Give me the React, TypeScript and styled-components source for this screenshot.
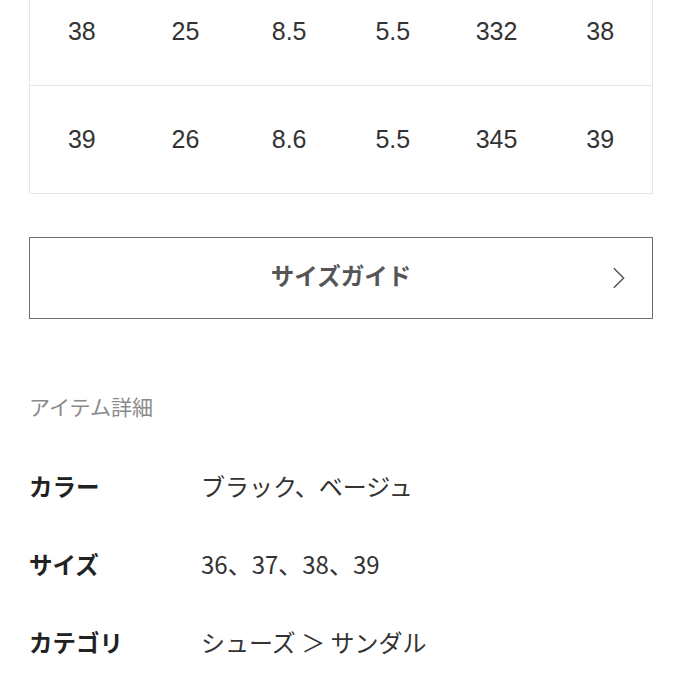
import styled, { createGlobalStyle } from 'styled-components';

const GlobalStyle = createGlobalStyle`
    html, body {
        margin: 0;
        padding: 0;
        background: #fff;
    }
    body {
        font-family: 'Liberation Sans', 'Noto Sans CJK JP', sans-serif;
        -webkit-font-smoothing: antialiased;
    }
`;

const sizeRows = [
    ['38', '25', '8.5', '5.5', '332', '38'],
    ['39', '26', '8.6', '5.5', '345', '39'],
];

const details = [
    { label: 'カラー', value: 'ブラック、ベージュ' },
    { label: 'サイズ', value: '36、37、38、39' },
    { label: 'カテゴリ', value: 'シューズ ＞ サンダル' },
];

const Chevron = () => (
    <ChevronIcon viewBox="0 0 14 24" aria-hidden>
        <path d="M2 1.5 L12.5 12 L2 22.5" fill="none" stroke="#555" strokeWidth="1.6" />
    </ChevronIcon>
);

const App = () => (
    <>
        <GlobalStyle />
        <Page>
            <SizeTable>
                {sizeRows.map((row, i) => (
                    <TableRow key={i}>
                        {row.map((cell, j) => (
                            <Cell key={j}>{cell}</Cell>
                        ))}
                    </TableRow>
                ))}
            </SizeTable>

            <GuideButton type="button">
                <GuideLabel>サイズガイド</GuideLabel>
                <Chevron />
            </GuideButton>

            <SectionTitle>アイテム詳細</SectionTitle>

            <DetailList>
                {details.map((d) => (
                    <DetailRow key={d.label}>
                        <DetailLabel>{d.label}</DetailLabel>
                        <DetailValue>{d.value}</DetailValue>
                    </DetailRow>
                ))}
            </DetailList>
        </Page>
    </>
);

export default App;

// STYLES

const Page = styled.main`
    width: 682px;
    height: 682px;
    overflow: hidden;
    padding: 0 29px;
    box-sizing: border-box;
`;

const SizeTable = styled.div`
    margin-top: -22px;
    border: 1px solid #e6e6e6;
    border-top: none;
`;

const TableRow = styled.div`
    display: grid;
    grid-template-columns: repeat(6, 1fr);
    height: 107px;
    align-items: center;

    & + & {
        border-top: 1px solid #e6e6e6;
    }
`;

const Cell = styled.span`
    text-align: center;
    font-family: 'Liberation Sans', Arial, sans-serif;
    font-size: 25px;
    color: #333;
`;

const GuideButton = styled.button`
    position: relative;
    display: flex;
    align-items: center;
    justify-content: center;
    width: 100%;
    height: 82px;
    margin-top: 43px;
    background: #fff;
    border: 1.5px solid #6e6e6e;
    padding: 0 0 4px;
    cursor: pointer;
`;

const GuideLabel = styled.span`
    font-family: 'Noto Sans CJK JP', sans-serif;
    font-weight: 700;
    font-size: 23.5px;
    line-height: 1;
    color: #555;
`;

const ChevronIcon = styled.svg`
    position: absolute;
    right: 27px;
    top: 50%;
    width: 13px;
    height: 24px;
    transform: translateY(-50%);
`;

const SectionTitle = styled.h2`
    margin: 73px 0 0;
    font-family: 'Noto Sans CJK JP', sans-serif;
    font-weight: 400;
    font-size: 21px;
    line-height: 28px;
    color: #8a8a8a;
`;

const DetailList = styled.dl`
    margin: 50px 0 0;
    display: flex;
    flex-direction: column;
    gap: 46px;
`;

const DetailRow = styled.div`
    display: grid;
    grid-template-columns: 172px 1fr;
    align-items: center;
    line-height: 32px;
`;

const DetailLabel = styled.dt`
    font-family: 'Noto Sans CJK JP', sans-serif;
    font-weight: 700;
    font-size: 23.5px;
    color: #222;
`;

const DetailValue = styled.dd`
    margin: 0;
    font-family: 'Noto Sans CJK JP', sans-serif;
    font-size: 24px;
    color: #333;
`;
